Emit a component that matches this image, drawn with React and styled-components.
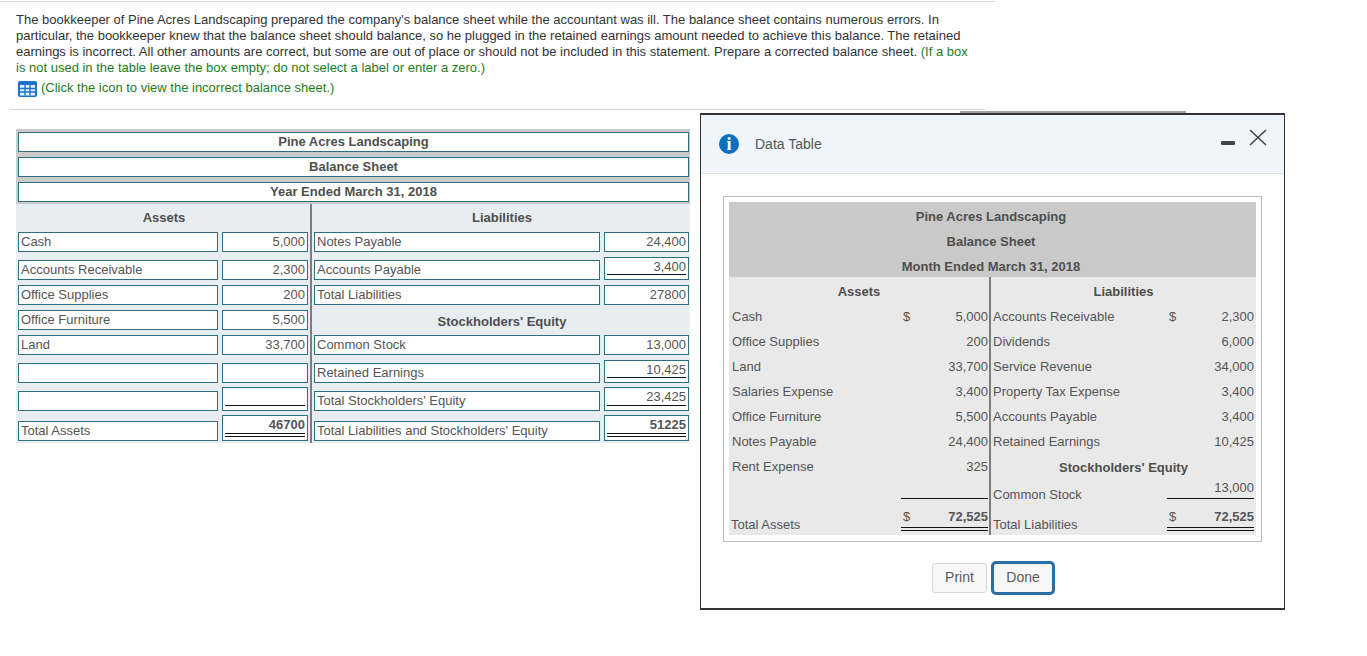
import React from "react";
import styled, { createGlobalStyle } from "styled-components";

const Global = createGlobalStyle`
  html, body { margin: 0; padding: 0; background: #fff; }
  body { font-family: "Liberation Sans", Arial, sans-serif; color: #4a4a4a; font-size: 13px; }
  * { box-sizing: border-box; }
`;

const Page = styled.div`
  position: relative;
  width: 1367px;
  height: 656px;
  overflow: hidden;
  padding-top: 1px;
`;
const TopRule = styled.div`
  width: 995px;
  height: 1px;
  background: #d8d8d8;
`;
const Question = styled.div`
  margin: 10px 0 0 16px;
  width: 960px;
  font-size: 13px;
  line-height: 16px;
  color: #333;
`;
const Hint = styled.span`
  color: #1c7c22;
`;
const IconLine = styled.div`
  margin: 2px 0 0 18px;
  display: flex;
  align-items: center;
  gap: 4px;
  height: 19px;
  font-size: 13px;
  color: #1c7c22;
`;
const IconSvg = styled.svg`
  margin-top: 3px;
  flex: none;
`;
const MidRule = styled.div`
  margin: 12px 0 0 10px;
  width: 975px;
  height: 1px;
  background: #d8d8d8;
`;

const Sheet = styled.div`
  margin: 19px 0 0 16px;
  width: 674px;
`;
const TitleBand = styled.div`
  background: #c8cacb;
  padding: 3px 1px 2px 2px;
  display: flex;
  flex-direction: column;
  gap: 5px;
`;
const TitleBox = styled.div`
  height: 20px;
  background: #fff;
  border: 1px solid #2b6f80;
  text-align: center;
  font-weight: bold;
  font-size: 13px;
  line-height: 17px;
  color: #4f4f4f;
`;
const Columns = styled.div`
  display: flex;
  background: #e7edf0;
  height: 239px;
`;
const Side = styled.div`
  width: ${(p) => p.$w}px;
  ${(p) => (p.$divider ? `border-left: 2px solid ${p.$divider};` : "")}
  padding-left: ${(p) => p.$pad}px;
  display: flex;
  flex-direction: column;
  gap: 4px;
`;
const SideHead = styled.div`
  height: ${(p) => p.$h}px;
  flex: none;
  display: flex;
  align-items: center;
  justify-content: center;
  padding-top: 3px;
  font-weight: bold;
  font-size: 13px;
  color: #4f4f4f;
`;
const Row = styled.div`
  height: ${(p) => p.$h}px;
  flex: none;
  display: flex;
  align-items: flex-end;
  gap: 4px;
`;
const Box = styled.div`
  width: ${(p) => p.$w}px;
  height: ${(p) => p.$h || 20}px;
  flex: none;
  position: relative;
  background: #fff;
  border: 1px solid #2b6f80;
  font-size: 13px;
  line-height: 17px;
  padding: 0 2px;
  white-space: nowrap;
  color: #555;
  text-align: ${(p) => (p.$num ? "right" : "left")};
  font-weight: ${(p) => (p.$bold ? "bold" : "normal")};
`;
const Under = styled.div`
  position: absolute;
  left: 2px;
  right: 2px;
  bottom: ${(p) => (p.$double ? 3 : 4)}px;
  height: ${(p) => (p.$double ? 4 : 1)}px;
  border-top: 1px solid #111;
  ${(p) => (p.$double ? "border-bottom: 1px solid #111;" : "")}
`;

const Modal = styled.div`
  position: absolute;
  left: 700px;
  top: 113px;
  width: 585px;
  height: 497px;
  background: #fff;
  border: 1px solid #333;
  border-top-width: 2px;
  border-bottom-width: 2px;
`;
const TopShadow = styled.div`
  position: absolute;
  left: 960px;
  top: 111px;
  width: 226px;
  height: 2px;
  background: #a0a0a0;
`;
const ModalHead = styled.div`
  height: 59px;
  background: #f0f5fc;
  border-bottom: 1px solid #d9e3ec;
  display: flex;
  align-items: center;
  padding: 0 17px 0 18px;
`;
const InfoBadge = styled.div`
  width: 20px;
  height: 20px;
  border-radius: 50%;
  background: #0b70bf;
  color: #fff;
  font-family: "Liberation Serif", serif;
  font-weight: bold;
  font-size: 18px;
  line-height: 20px;
  text-align: center;
`;
const ModalTitle = styled.div`
  margin-left: 16px;
  font-size: 14px;
  color: #555;
  flex: 1;
`;
const WinButtons = styled.div`
  display: flex;
  align-items: center;
  gap: 14px;
  margin-top: -14px;
`;
const Minimize = styled.div`
  width: 14px;
  height: 4px;
  margin-top: 11px;
  border-radius: 1px;
  background: #444;
`;
const ModalBody = styled.div`
  padding: 22px 22px 0 22px;
`;
const Frame = styled.div`
  border: 1px solid #bcbcbc;
  padding: 5px;
  height: 346px;
`;
const DataTitle = styled.div`
  background: #c9c9c9;
  height: 75px;
  display: flex;
  flex-direction: column;
  align-items: center;
  padding-right: 3px;
`;
const DataTitleLine = styled.div`
  height: 25px;
  line-height: 30px;
  font-weight: bold;
  font-size: 13px;
  color: #4f4f4f;
`;
const DataCols = styled.div`
  display: flex;
  background: #e9e9e9;
  height: 258px;
`;
const DataSide = styled.div`
  width: ${(p) => p.$w}px;
  ${(p) => (p.$divider ? "border-left: 2px solid #7d7d7d;" : "")}
  display: flex;
  flex-direction: column;
`;
const DataHead = styled.div`
  height: ${(p) => p.$h}px;
  flex: none;
  display: flex;
  align-items: center;
  justify-content: center;
  padding-top: 2px;
  font-weight: bold;
  font-size: 13px;
  color: #4f4f4f;
`;
const DataRow = styled.div`
  height: ${(p) => p.$h}px;
  flex: none;
  display: flex;
  font-size: 13px;
  color: #555;
`;
const DataLabel = styled.div`
  flex: 1;
  padding-left: ${(p) => p.$pad}px;
  display: flex;
  align-items: ${(p) => (p.$end ? "flex-end" : "center")};
  padding-bottom: ${(p) => p.$pb || 0}px;
  margin-bottom: ${(p) => p.$mb || 0}px;
  white-space: nowrap;
`;
const DataAmount = styled.div`
  width: ${(p) => p.$w}px;
  flex: none;
  margin-right: ${(p) => p.$mr}px;
  position: relative;
  display: flex;
  justify-content: space-between;
  align-items: ${(p) => (p.$end ? "flex-end" : "center")};
  padding: 0 0 ${(p) => p.$pb || 0}px 2px;
  font-weight: ${(p) => (p.$bold ? "bold" : "normal")};
  ${(p) => (p.$line ? "border-bottom: 1px solid #111;" : "")}
`;
const Dollar = styled.span`
  font-weight: normal;
`;
const DoubleRule = styled.div`
  position: absolute;
  left: 0;
  right: 0;
  bottom: 4px;
  height: 4px;
  border-top: 1px solid #111;
  border-bottom: 1px solid #111;
`;
const Actions = styled.div`
  margin-top: 19px;
  display: flex;
  align-items: center;
  padding-left: 209px;
`;
const PrintBtn = styled.button`
  width: 55px;
  height: 30px;
  font: 14px "Liberation Sans", Arial, sans-serif;
  color: #5a5a5a;
  background: #f7f7f7;
  border: 1px solid #d6d6d6;
  border-radius: 3px;
  padding: 0 0 2px;
`;
const DoneBtn = styled(PrintBtn)`
  margin-left: 4px;
  width: 64px;
  height: 34px;
  border: 3px solid #2a6ea6;
  border-radius: 5px;
`;

const TableIcon = () => (
  <IconSvg width="19" height="16" viewBox="0 0 19 16">
    <rect width="19" height="16" rx="2" fill="#1f72c9" />
    <path d="M2 4h15v10.5H2z" fill="#e4effa" />
    <path d="M2 7.5h15M2 11h15M7 4v10.5M12 4v10.5" stroke="#1f72c9" strokeWidth="1.4" fill="none" />
  </IconSvg>
);
const CloseIcon = () => (
  <svg width="18" height="17" viewBox="0 0 18 17">
    <path d="M1 1l16 15M17 1L1 16" stroke="#444" strokeWidth="1.6" fill="none" />
  </svg>
);

const left = [
  { h: 20, label: "Cash", val: "5,000" },
  { h: 24, label: "Accounts Receivable", val: "2,300" },
  { h: 21, label: "Office Supplies", val: "200" },
  { h: 21, label: "Office Furniture", val: "5,500" },
  { h: 21, label: "Land", val: "33,700" },
  { h: 24, label: "", val: "" },
  { h: 24, label: "", val: "", bh: 24, line: 1 },
  { h: 26, label: "Total Assets", val: "46700", bh: 26, line: 2, bold: true },
];
const right = [
  { h: 20, label: "Notes Payable", val: "24,400" },
  { h: 24, label: "Accounts Payable", val: "3,400", bh: 23, line: 1 },
  { h: 21, label: "Total Liabilities", val: "27800" },
  { h: 21, head: "Stockholders' Equity" },
  { h: 21, label: "Common Stock", val: "13,000" },
  { h: 24, label: "Retained Earnings", val: "10,425", bh: 23, line: 1 },
  { h: 24, label: "Total Stockholders' Equity", val: "23,425", bh: 24, line: 1 },
  { h: 26, label: "Total Liabilities and Stockholders' Equity", val: "51225", bh: 26, line: 2, bold: true },
];

const dataLeft = [
  ["Cash", "5,000", true],
  ["Office Supplies", "200"],
  ["Land", "33,700"],
  ["Salaries Expense", "3,400"],
  ["Office Furniture", "5,500"],
  ["Notes Payable", "24,400"],
  ["Rent Expense", "325"],
];
const dataRight = [
  ["Accounts Receivable", "2,300", true],
  ["Dividends", "6,000"],
  ["Service Revenue", "34,000"],
  ["Property Tax Expense", "3,400"],
  ["Accounts Payable", "3,400"],
  ["Retained Earnings", "10,425"],
];

function SheetRows({ rows, labelW, numW }) {
  return rows.map((r, i) =>
    r.head ? (
      <SideHead key={i} $h={r.h}>{r.head}</SideHead>
    ) : (
      <Row key={i} $h={r.h}>
        <Box $w={labelW}>{r.label}</Box>
        <Box $w={numW} $num $h={r.bh} $bold={r.bold}>
          {r.val}
          {r.line ? <Under $double={r.line === 2} /> : null}
        </Box>
      </Row>
    )
  );
}

export default function App() {
  return (
    <Page>
      <Global />
      <TopRule />
      <Question>
        The bookkeeper of Pine Acres Landscaping prepared the company's balance sheet while the accountant was ill. The balance sheet contains numerous errors. In particular, the bookkeeper knew that the balance sheet should balance, so he plugged in the retained earnings amount needed to achieve this balance. The retained earnings is incorrect. All other amounts are correct, but some are out of place or should not be included in this statement. Prepare a corrected balance sheet. <Hint>(If a box is not used in the table leave the box empty; do not select a label or enter a zero.)</Hint>
      </Question>
      <IconLine>
        <TableIcon />
        (Click the icon to view the incorrect balance sheet.)
      </IconLine>
      <MidRule />
      <Sheet>
        <TitleBand>
          <TitleBox>Pine Acres Landscaping</TitleBox>
          <TitleBox>Balance Sheet</TitleBox>
          <TitleBox>Year Ended March 31, 2018</TitleBox>
        </TitleBand>
        <Columns>
          <Side $w={294} $pad={2}>
            <SideHead $h={24}>Assets</SideHead>
            <SheetRows rows={left} labelW={200} numW={86} />
          </Side>
          <Side $w={380} $pad={2} $divider="#7d7d7d">
            <SideHead $h={24}>Liabilities</SideHead>
            <SheetRows rows={right} labelW={286} numW={85} />
          </Side>
        </Columns>
      </Sheet>
      <TopShadow />
      <Modal>
        <ModalHead>
          <InfoBadge>i</InfoBadge>
          <ModalTitle>Data Table</ModalTitle>
          <WinButtons>
            <Minimize />
            <CloseIcon />
          </WinButtons>
        </ModalHead>
        <ModalBody>
          <Frame>
            <DataTitle>
              <DataTitleLine>Pine Acres Landscaping</DataTitleLine>
              <DataTitleLine>Balance Sheet</DataTitleLine>
              <DataTitleLine>Month Ended March 31, 2018</DataTitleLine>
            </DataTitle>
            <DataCols>
              <DataSide $w={260}>
                <DataHead $h={27}>Assets</DataHead>
                {dataLeft.map(([l, v, d]) => (
                  <DataRow key={l} $h={25}>
                    <DataLabel $pad={3}>{l}</DataLabel>
                    <DataAmount $w={87} $mr={1}>
                      <Dollar>{d ? "$" : ""}</Dollar>
                      <span>{v}</span>
                    </DataAmount>
                  </DataRow>
                ))}
                <DataRow $h={20}>
                  <DataLabel $pad={3} />
                  <DataAmount $w={87} $mr={1} $line />
                </DataRow>
                <DataRow $h={36}>
                  <DataLabel $pad={2} $end $pb={3}>Total Assets</DataLabel>
                  <DataAmount $w={87} $mr={1} $bold $end $pb={11}>
                    <Dollar>$</Dollar>
                    <span>72,525</span>
                    <DoubleRule />
                  </DataAmount>
                </DataRow>
              </DataSide>
              <DataSide $w={267} $divider>
                <DataHead $h={27}>Liabilities</DataHead>
                {dataRight.map(([l, v, d]) => (
                  <DataRow key={l} $h={25}>
                    <DataLabel $pad={2}>{l}</DataLabel>
                    <DataAmount $w={87} $mr={2}>
                      <Dollar>{d ? "$" : ""}</Dollar>
                      <span>{v}</span>
                    </DataAmount>
                  </DataRow>
                ))}
                <DataHead $h={25}>Stockholders' Equity</DataHead>
                <DataRow $h={20}>
                  <DataLabel $pad={2} $end $mb={-3}>Common Stock</DataLabel>
                  <DataAmount $w={87} $mr={2} $line $end $pb={3}>
                    <Dollar />
                    <span>13,000</span>
                  </DataAmount>
                </DataRow>
                <DataRow $h={36}>
                  <DataLabel $pad={2} $end $pb={3}>Total Liabilities</DataLabel>
                  <DataAmount $w={87} $mr={2} $bold $end $pb={11}>
                    <Dollar>$</Dollar>
                    <span>72,525</span>
                    <DoubleRule />
                  </DataAmount>
                </DataRow>
              </DataSide>
            </DataCols>
          </Frame>
          <Actions>
            <PrintBtn>Print</PrintBtn>
            <DoneBtn>Done</DoneBtn>
          </Actions>
        </ModalBody>
      </Modal>
    </Page>
  );
}
